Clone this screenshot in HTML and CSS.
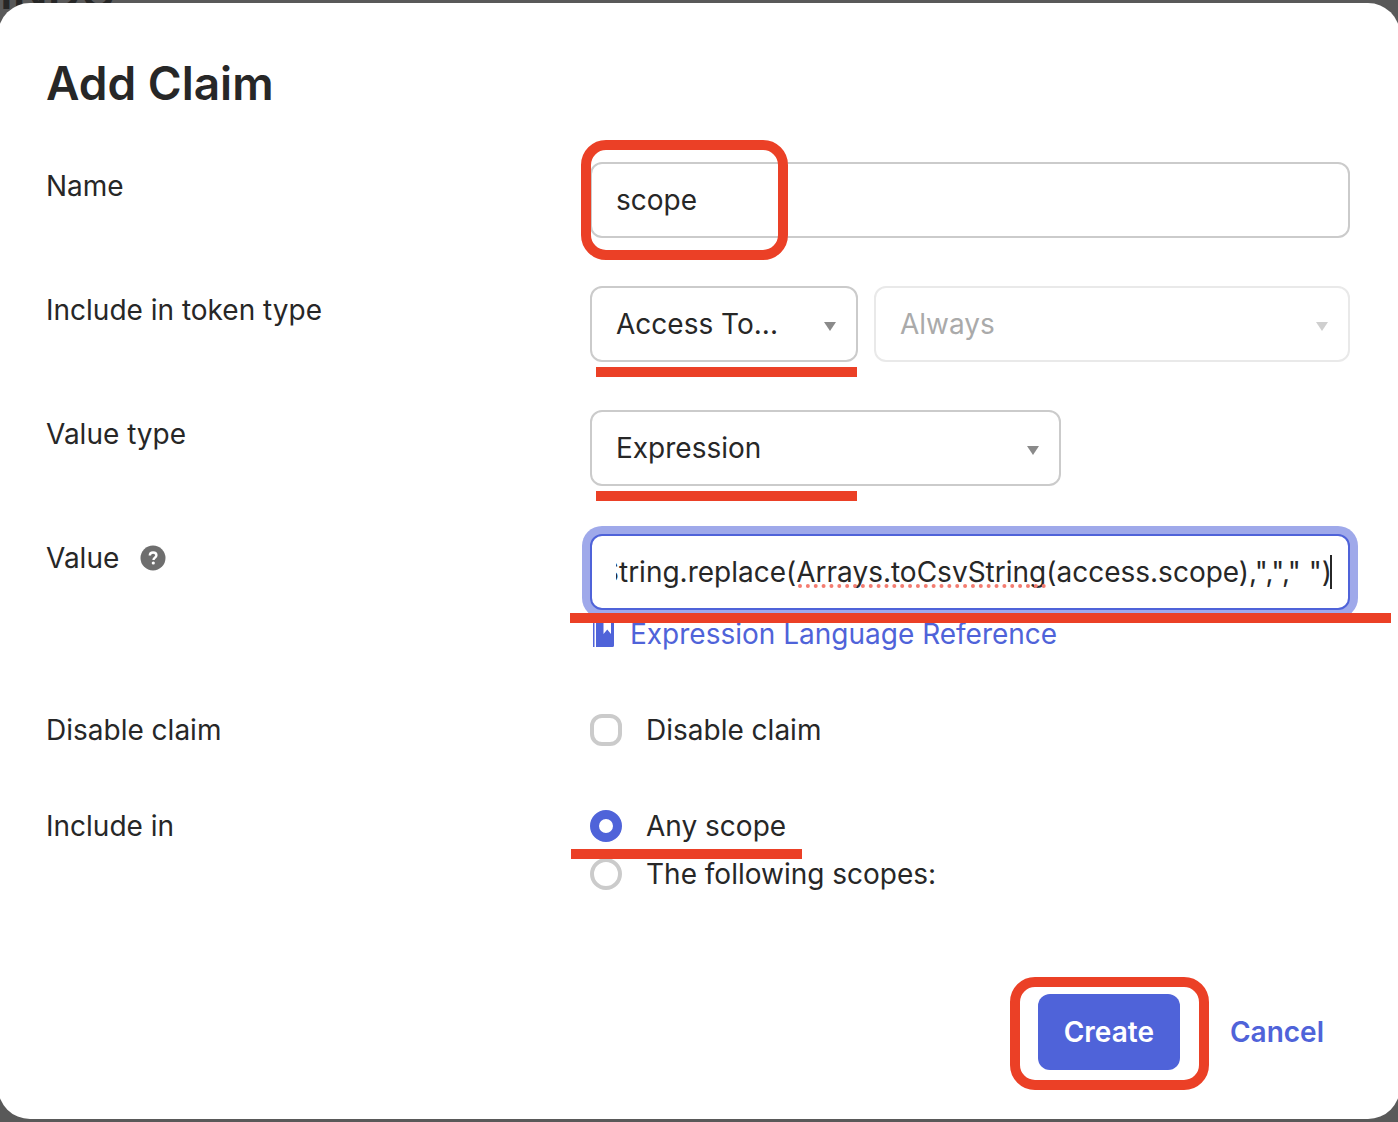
FILE: index.html
```html
<!DOCTYPE html>
<html lang="en">
<head>
  <meta charset="UTF-8" />
  <meta name="viewport" content="width=device-width, initial-scale=1.0" />
  <title>Add Claim</title>
  <link rel="stylesheet" href="styles.css">
</head>
<body>
  <div class="page-behind" aria-hidden="true">INDC</div>

  <form class="modal" onsubmit="return false">
    <h1>Add Claim</h1>

    <div class="row">
      <label class="row-label" for="name">Name</label>
      <div class="field">
        <input class="text-input" type="text" id="name" value="scope">
        <span class="mark mark-name"></span>
      </div>
    </div>

    <div class="row">
      <label class="row-label" for="token_type">Include in token type</label>
      <div class="select-group">
        <div class="select select-token">
          <select id="token_type">
            <option>Access To...</option>
            <option>ID Token</option>
          </select>
          <span class="mark mark-select"></span>
        </div>
        <div class="select select-always disabled">
          <select id="token_when" aria-label="When to include" disabled>
            <option>Always</option>
          </select>
        </div>
      </div>
    </div>

    <div class="row">
      <label class="row-label" for="value_type">Value type</label>
      <div class="select select-value">
        <select id="value_type">
          <option>Expression</option>
          <option>Groups</option>
        </select>
        <span class="mark mark-select"></span>
      </div>
    </div>

    <div class="row">
      <div class="row-label">
        <label for="value">Value</label>
        <svg class="help" viewBox="0 0 26 26" role="img" aria-label="Help">
          <circle cx="13" cy="13" r="12.5" fill="#6e6e6e"/>
          <path d="M9.8 10.6c0-1.900 1.300-3.100 3.300-3.100s3.300 1.100 3.300 2.800c0 2.300-2.900 2.300-2.900 4.700" fill="none" stroke="#fff" stroke-width="2.400"/>
          <circle cx="13.300" cy="18" r="1.600" fill="#fff"/>
        </svg>
      </div>
      <div>
        <div class="field">
          <input class="text-input focused" type="text" id="value" spellcheck="false" value='String.replace(Arrays.toCsvString(access.scope),","," ")'>
          <span class="spelling"></span>
          <span class="caret"></span>
          <span class="mark mark-value"></span>
        </div>
        <a class="doc-link" href="#">
          <svg class="book" viewBox="0 0 24 28" aria-hidden="true">
            <path d="M1 1h1.500v26H1zM4 1h15.500Q22 1 22 3v22.500Q22 27 20.500 27H4z" fill="#4f63d9"/>
            <path d="M11.500 1h7.500v13l-3.750-4.500-3.750 4.500z" fill="#fff"/>
          </svg>
          Expression Language Reference
        </a>
      </div>
    </div>

    <div class="row">
      <span class="row-label">Disable claim</span>
      <label class="choice"><input type="checkbox" name="disable">Disable claim</label>
    </div>

    <div class="row">
      <span class="row-label">Include in</span>
      <div>
        <label class="choice">
          <input type="radio" name="scopes" checked>Any scope
          <span class="mark mark-scope"></span>
        </label>
        <label class="choice"><input type="radio" name="scopes">The following scopes:</label>
      </div>
    </div>

    <div class="actions">
      <div class="create">
        <button class="btn btn-primary" type="submit">Create</button>
        <span class="mark mark-create"></span>
      </div>
      <button class="btn btn-link" type="button">Cancel</button>
    </div>
  </form>

  <script>
    // keep the end of the expression in view
    const value = document.getElementById("value");
    value.scrollLeft = value.scrollWidth;
  </script>
</body>
</html>
```

FILE: styles.css
```css
* {
  box-sizing: border-box;
}

body {
  margin: 0;
  padding: 3px 0;
  min-height: 100vh;
  background: #595959;
  color: #272727;
  font-family: Inter, "Liberation Sans", sans-serif;
  font-size: 28px;
  line-height: 48px;
  position: relative;
  overflow-x: hidden;
}

.page-behind {
  position: absolute;
  top: -32px;
  left: 0;
  font-size: 46px;
  font-weight: 600;
  color: #272727;
}

.modal {
  position: relative;
  margin: 0 -2px;
  padding: 48px 50px 49px 48px;
  background: #fff;
  border-radius: 32px;
}

h1 {
  margin: 0 0 47px;
  font-size: 46px;
  line-height: 64px;
  font-weight: 600;
}

.row {
  display: grid;
  grid-template-columns: 544px minmax(0, 1fr);
  margin-bottom: 48px;
}

.row-label {
  display: flex;
  align-items: center;
  align-self: start;
  gap: 21px;
}

.help {
  width: 26px;
  height: 26px;
}

.field,
.select,
.choice,
.create {
  position: relative;
}

.text-input,
select {
  display: block;
  width: 100%;
  height: 76px;
  padding: 0 24px;
  border: 2px solid #cbcbcb;
  border-radius: 12px;
  background: #fff;
  color: inherit;
  font: inherit;
  outline: none;
}

.text-input.focused {
  padding-right: 16px;
  border-color: #4f63d9;
  box-shadow: 0 0 0 8px #9fa9ea;
}

select {
  appearance: none;
}

.select::after {
  content: "";
  position: absolute;
  top: 36px;
  right: 22px;
  border: 6px solid transparent;
  border-top: 9px solid #8a8a8a;
  border-bottom: 0;
  pointer-events: none;
}

.select-group {
  display: flex;
  gap: 16px;
}

.select-token {
  width: 268px;
}

.select-always {
  flex: 1;
}

.select-value {
  width: 471px;
}

.disabled select {
  border-color: #e9e9e9;
  color: #aaa;
  opacity: 1;
}

.disabled::after {
  border-top-color: #cfcfcf;
}

/* spell checker underline and text cursor */
.spelling {
  position: absolute;
  top: 50px;
  left: 208px;
  width: 248px;
  border-bottom: 4px dotted #f47c70;
}

.caret {
  position: absolute;
  top: 21px;
  right: 18px;
  width: 2px;
  height: 34px;
  background: #272727;
}

.doc-link {
  display: flex;
  align-items: center;
  gap: 14px;
  padding-left: 2px;
  color: #4f63d9;
  text-decoration: none;
}

.book {
  width: 24px;
  height: 28px;
}

.choice {
  display: flex;
  align-items: center;
  gap: 24px;
}

.choice input {
  appearance: none;
  width: 32px;
  height: 32px;
  margin: 0;
  border: 4px solid #cbcbcb;
  border-radius: 12px;
  background: #fff;
}

.choice input[type="radio"] {
  border-radius: 50%;
}

.choice input[type="radio"]:checked {
  border: 9px solid #4f63d9;
}

.actions {
  display: flex;
  justify-content: flex-end;
  gap: 24px;
  margin-top: 96px;
}

.btn {
  height: 76px;
  padding: 0 26px;
  border: 0;
  border-radius: 12px;
  font: inherit;
  font-weight: 600;
  cursor: pointer;
}

.btn-primary {
  background: #4f63d9;
  color: #fff;
}

.btn-link {
  background: none;
  color: #4f63d9;
}

/* red annotations */
.mark {
  position: absolute;
  z-index: 1;
  height: 10px;
  background: #eb4026;
  pointer-events: none;
}

.mark-name,
.mark-create {
  height: auto;
  background: none;
  border: 10px solid #eb4026;
  border-radius: 25px;
}

.mark-name {
  top: -22px;
  bottom: -22px;
  left: -9px;
  width: 207px;
}

.mark-select {
  bottom: -15px;
  left: 6px;
  width: 261px;
}

.mark-value {
  bottom: -13px;
  left: -20px;
  right: -41px;
}

.mark-scope {
  bottom: -9px;
  left: -19px;
  width: 231px;
}

.mark-create {
  top: -17px;
  bottom: -20px;
  left: -28px;
  right: -29px;
}
```
